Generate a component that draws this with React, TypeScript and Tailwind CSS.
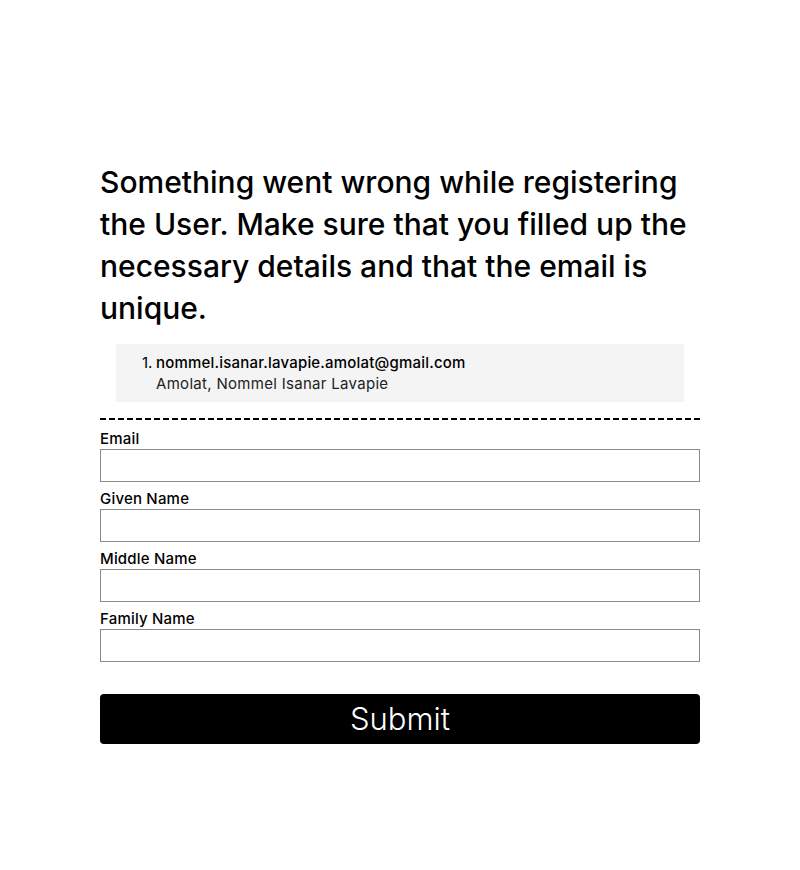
export default function App() {
  const fields = ["Email", "Given Name", "Middle Name", "Family Name"];
  return (
    <div className="min-h-[870px] w-[800px] bg-white" style={{ fontFamily: "Inter, 'Open Sans', sans-serif" }}>
      <div className="mx-auto w-[600px] pt-[161px]">
        <h1 className="text-[30px] font-medium leading-[42px] text-black">
          Something went wrong while registering the User. Make sure that you filled up the necessary details and that the email is unique.
        </h1>
        <div className="mx-4 mt-[15px] bg-[#f4f4f4] py-[8px] pl-[40px] text-[15px] leading-[21px] text-black">
          <div className="relative">
            <span className="absolute left-[-14px]">1.</span>
            <div className="font-medium tracking-[0.2px]">nommel.isanar.lavapie.amolat@gmail.com</div>
            <div className="tracking-[0.3px] text-[#222]">Amolat, Nommel Isanar Lavapie</div>
          </div>
        </div>
        <div className="mt-[16px] h-[2px] w-full bg-[repeating-linear-gradient(90deg,#000_0_6px,transparent_6px_9px)]" />
        <div className="mt-[10px] flex flex-col">
          {fields.map((f) => (
            <div key={f} className="flex flex-col">
              <label className="text-[15px] font-medium leading-[18px] tracking-[0.2px] text-black">{f}</label>
              <div className="mt-[1px] mb-[8px] h-[33px] border border-[#8a8a8a] bg-white" />
            </div>
          ))}
        </div>
        <button className="mt-[24px] flex h-[50px] w-full items-center justify-center rounded-[4px] bg-black text-[31px] font-light text-white">
          Submit
        </button>
      </div>
    </div>
  );
}
